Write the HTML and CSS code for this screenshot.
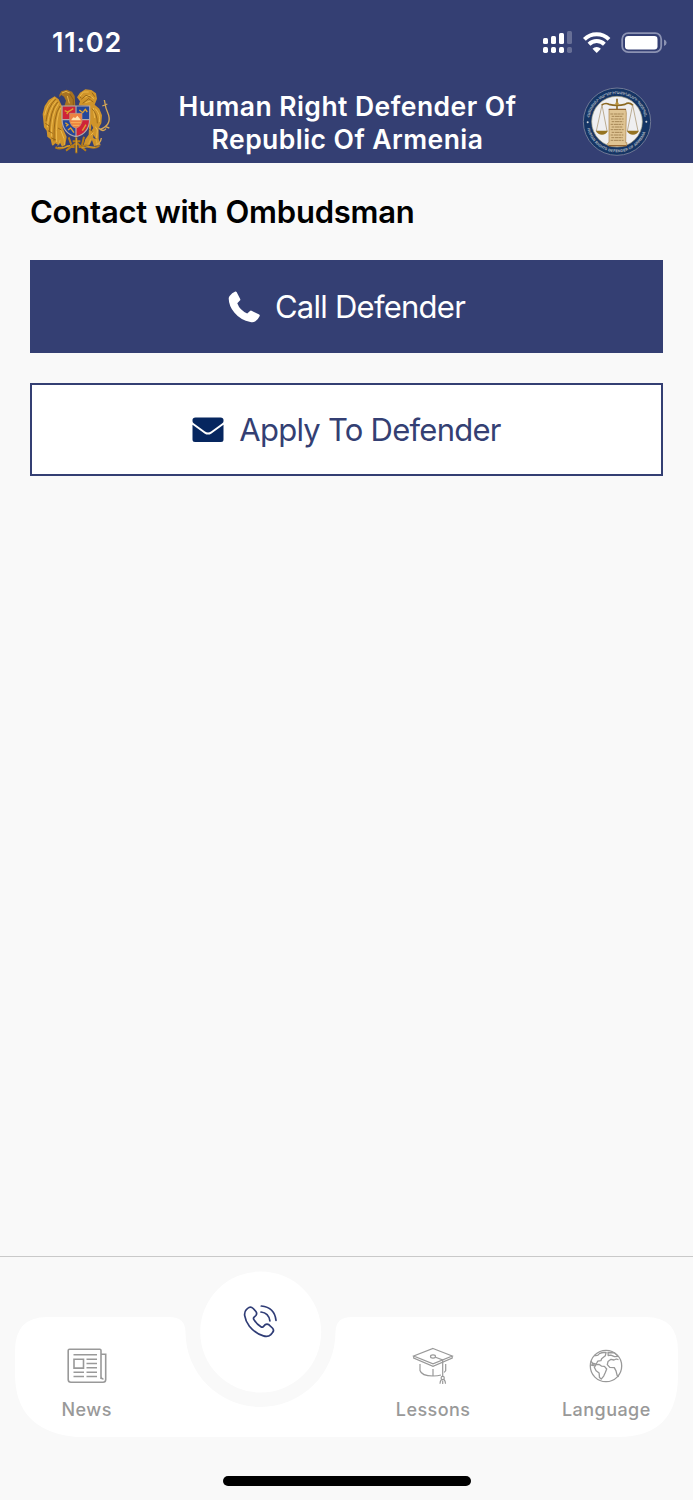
FILE: index.html
```html
<!DOCTYPE html>
<html lang="en">
<head>
    <meta charset="UTF-8">
    <meta name="viewport" content="width=device-width, initial-scale=1.0">
    <title>Human Right Defender Of Republic Of Armenia</title>
    <link rel="stylesheet" href="styles.css">
</head>
<body>
    <header>
        <div class="status-bar">
            <span class="time">11:02</span>
            <svg class="status-icons" viewBox="0 0 130 30" width="130" height="30">
                <!-- signal -->
                <g fill="#fff">
                    <rect x="3" y="13" width="5" height="6" rx="1.5"/>
                    <rect x="11" y="11" width="5" height="8" rx="1.5"/>
                    <rect x="19" y="8" width="5" height="11" rx="1.5"/>
                    <rect x="3" y="22" width="5" height="6" rx="1.7"/>
                    <rect x="11" y="22" width="5" height="6" rx="1.7"/>
                    <rect x="19" y="22" width="5" height="6" rx="1.7"/>
                </g>
                <g fill="#fff" opacity=".25">
                    <rect x="27" y="6" width="5" height="13" rx="1.5"/>
                    <rect x="27" y="22" width="5" height="6" rx="1.7"/>
                </g>
                <!-- wifi -->
                <g fill="none" stroke="#fff" stroke-width="4">
                    <path d="M44.400 14.300A17.500 17.500 0 0 1 69 14.300"/>
                    <path d="M49 19.200A11 11 0 0 1 64.400 19.200"/>
                </g>
                <path fill="#fff" d="M56.700 28l-4.200-4.300a6 6 0 0 1 8.400 0z"/>
                <!-- battery -->
                <rect x="82.200" y="8.200" width="39" height="19" rx="6" fill="none" stroke="#8c93b3" stroke-width="1.800"/>
                <rect x="85" y="11" width="32.500" height="13.500" rx="3.200" fill="#fff"/>
                <path fill="#8c93b3" d="M124 14.500q2.600 1 2.600 3.300t-2.600 3.300z"/>
            </svg>
        </div>
        <div class="title-row">
            <svg class="emblem" viewBox="0 0 285 255" width="95" height="85">
                <!-- eagle -->
                <path fill="#cf942a" d="M74 55L86 64L94 80L98 88L98 150L110 176L106 200L96 206L90 194L80 206L66 202L62 184L52 176L50 158L42 148L40 128L38 108L44 84L56 66z"/>
                <path fill="#a87322" d="M88 50L94 40L110 35L126 41L134 54L136 84L102 88L108 68L102 56L94 51L88 58z"/>
                <!-- lion -->
                <path fill="#cf942a" d="M141 58L150 44L166 34L184 36L198 46L201 62L194 80L208 92L216 112L214 136L206 150L206 182L212 202L192 204L186 186L178 202L160 204L166 184L176 170L180 84L146 82L150 70z"/>
                <path fill="#343f73" d="M184 138L190 150L183 160zM190 170L198 184L190 180zM66 206L76 196L84 200L78 208z"/>
                <g fill="none" stroke="#f0c052" stroke-width="2.500">
                    <path d="M74 60Q50 78 44 112M80 68Q56 92 52 148M86 76Q64 104 64 176M92 90Q76 118 80 192M92 156L102 182"/>
                    <path d="M96 45L108 40L120 46M112 54L118 76M150 54L160 42L176 42M164 58L178 52L192 62M166 74L184 68M196 92Q212 108 208 132M190 90L194 120M196 146L202 156L200 180M182 172L190 164"/>
                </g>
                <g fill="none" stroke="#7d510f" stroke-width="2">
                    <path d="M77 63Q53 86 48 130M83 72Q60 98 58 162M90 84Q70 112 72 190M46 136L58 144M54 158L68 166M64 180L78 186M84 150L94 156"/>
                    <path d="M118 46L130 64L130 82M154 64L168 52L184 58M158 76L176 62L190 72M186 44L194 56M186 92Q202 108 202 136M178 154L188 160M150 58L154 60"/>
                </g>
                <!-- sword and tail -->
                <path fill="none" stroke="#d7a753" stroke-width="4" d="M223 66Q226 90 236 112Q244 142 210 154M217 84L232 78M206 150Q220 164 228 152M214 180Q212 196 198 200M226 146L238 150"/>
                <!-- branches under the shield -->
                <path fill="none" stroke="#b77c17" stroke-width="6" d="M76 208Q92 216 112 204L134 208M146 208L168 202Q188 216 208 204M108 218L140 194L168 218M139 178V226M128 190H151M116 178L124 200M162 176L156 202"/>
                <path fill="none" stroke="#e9b641" stroke-width="2" d="M84 208L104 208L120 202M139 180V222M154 210L178 206L196 208M90 186L86 202M102 182L104 202M182 184L176 198M198 184L202 200"/>
                <!-- shield -->
                <path fill="#cf2338" d="M97 85h40v41H97z"/>
                <path fill="#23479b" d="M138 85h41v41h-41z"/>
                <path fill="#23479b" d="M97 126h41v50q-39-10-41-50z"/>
                <path fill="#cf2338" d="M138 126h41q-1 40-41 50z"/>
                <path fill="none" stroke="#dfa12f" stroke-width="4" d="M104 98L114 102L130 92M110 108L118 98M148 96L158 104L166 94L172 102M106 134L114 140L108 145M114 156L122 150L132 164M157 158L168 140"/>
                <path fill="none" stroke="#b6aaa7" stroke-width="3.500" d="M96 84h83v41q-2 41-41 51-40-10-42-51zM138 84v92M96 125h83"/>
                <path fill="#ec8240" stroke="#bd9987" stroke-width="2" d="M119 106h37v25q-4 16-18 20-15-5-19-20z"/>
                <path fill="#ffe2ab" d="M124 125l6-7 6 2 6-7 10 12v2h-28z"/>
                <path stroke="#f9b257" stroke-width="3" d="M122 134h31M128 142h20"/>
            </svg>
            <h1>Human Right Defender Of Republic Of Armenia</h1>
            <svg class="emblem" viewBox="0 0 285 255" width="95" height="85">
                <circle cx="141" cy="131" r="101" fill="#153565" stroke="#6f7895" stroke-width="3"/>
                <circle cx="141" cy="131" r="76" fill="#efeff1" stroke="#a6a184" stroke-width="2"/>
                <path id="ringTop" fill="none" d="M58 119A84 84 0 0 1 224 119"/>
                <path id="ringBottom" fill="none" d="M52 151A91 91 0 0 0 230 151"/>
                <text class="ring-text"><textPath href="#ringTop" textLength="236">ՀԱՅԱՍՏԱՆԻ ՄԱՐԴՈՒ ԻՐԱՎՈՒՆՔՆԵՐԻ ՊԱՇՏՊԱՆ</textPath></text>
                <text class="ring-text"><textPath href="#ringBottom" textLength="236">HUMAN RIGHTS DEFENDER OF ARMENIA</textPath></text>
                <circle cx="53" cy="133" r="3" fill="#d5d7d8"/>
                <circle cx="229" cy="131" r="3" fill="#d5d7d8"/>
                <!-- scroll -->
                <path fill="#dfc493" stroke="#a88146" stroke-width="2" d="M117 94h50l2 10-2 90h4l-2 10h-53l-4-7 5-4z"/>
                <path fill="none" stroke="#a58655" stroke-width="3" stroke-dasharray="8 2 12 1" d="M121 108h40M125 115h34M123 123h38M125 131h35M122 139h38M125 147h34M122 155h39M125 163h34M122 171h38M124 179h35M122 187h39"/>
                <path stroke="#8b5a26" stroke-width="3" d="M116 94h52M116 203h53"/>
                <!-- scales -->
                <path fill="none" stroke="#8b6821" stroke-width="5" d="M95 81q12-8 22-2 24 6 48 0 12-8 24 3M141 62v32"/>
                <circle cx="141" cy="77" r="5" fill="#b99039"/>
                <path fill="none" stroke="#a28b62" stroke-width="2" d="M96 81l-17 78M96 81l15 78M188 81l-16 78M188 81l16 78"/>
                <path fill="#957322" d="M77 158h37q-6 12-18 12t-19-12zM170 158h37q-6 12-18 12t-19-12z"/>
            </svg>
        </div>
    </header>

    <main>
        <h2>Contact with Ombudsman</h2>
        <button class="btn btn-call">
            <svg viewBox="0 0 32 32" width="32" height="32">
                <path fill="#fff" d="M7.300.500Q8.100.200 8.600 1l3.600 7.100q.4.900-.3 1.500L9.300 12.300Q11.800 19.400 19.200 22.400L22 19.900q.700-.6 1.500-.2l7.700 3.900q.8.500.5 1.300-1.700 3.600-4.300 5.400-2.100 1.400-5 .7Q12.600 29.200 6.500 21.800.8 15 .7 7.400q0-1.500.9-2.500Q4 2 7.300.500z"/>
            </svg>
            <span>Call Defender</span>
        </button>
        <button class="btn btn-apply">
            <svg viewBox="0 0 32 32" width="32" height="32">
                <path fill="#06265f" d="M3.500 3.500h25Q31.500 3.500 31.500 6v1.200q0 1.200-1.500 2.200l-11 8q-3 2.200-6 0L2 9.400Q.500 8.400.500 7.200V6q0-2.500 3-2.500z"/>
                <path fill="#06265f" d="M.500 10.800l12 8.600q3.500 2.400 7 0l12-8.600v14.700q0 2.500-2.500 2.500H3Q.500 28 .500 25.500z"/>
            </svg>
            <span>Apply To Defender</span>
        </button>
    </main>

    <nav>
        <svg class="nav-shape" viewBox="0 0 693 190" width="693" height="190">
            <path fill="#fff" d="M47 60H169q16.500 0 16.500 15a75 75 0 0 0 150 0q0-15 16.500-15H646q32 0 32 34v24q0 62-60 62H76q-61-6-61-63V94q0-34 32-34z"/>
            <circle cx="260.700" cy="75" r="60.500" fill="#fff"/>
        </svg>
        <a class="tab">
            <svg viewBox="0 0 42 42" width="42" height="42" fill="none" stroke="#999" stroke-width="1.600">
                <path d="M35 34V5.500q0-1.300-1.200-1.300H3.500Q2.200 4.200 2.200 5.500v29q0 2.700 2.800 2.700h32q2.700 0 2.700-2.700V9.200H35M35 31.500q0 2.500 2.500 2.500"/>
                <path d="M7.500 9.700h23.500M20.500 14.200H31M20.500 18.500H31M20.500 22.800H31M7.500 27.200h10.500M20.500 27.200H31M7.500 31.500h10.500M20.500 31.500H31M8 14.200h9.500v8.900H8z"/>
            </svg>
            <span>News</span>
        </a>
        <a class="tab active">
            <svg viewBox="0 0 36 36" width="36" height="36" fill="none" stroke="#2f3c76" stroke-width="1.700" stroke-linecap="round" stroke-linejoin="round">
                <path d="M4.500 4.500q3-2.800 5.700 0l2.700 3q1.500 2 0 4l-2 1.900q-.8.900 0 2.200 2.800 4.500 7 7.200 1.300.8 2.200 0l1.900-2q2-1.500 4 0l3.400 3.200q2.200 2.400 0 4.700l-1.600 1.900q-2.700 2.700-7.400 1.300-8.200-2.400-14-9.700-4-5.300-4.700-10.600Q1.200 8 3.200 5.800z"/>
                <path d="M18 8q7.700.8 8.900 8.900M18.300 2q13.300 1.400 14.700 14.300"/>
            </svg>
        </a>
        <a class="tab">
            <svg viewBox="0 0 42 42" width="42" height="42" fill="none" stroke="#999" stroke-width="1.200">
                <path d="M21 3.500L40.200 11 21 18.800 1.700 11zM1.700 11v2L21 21.300 40.200 13v-2M8 19v6.500Q9.500 31 21 31q5 0 8-1M33.700 19v6.500l-1.500 2M21 24v7"/>
                <ellipse cx="21" cy="11.500" rx="2.500" ry="1.600"/>
                <path d="M23.500 12.300l7.200 2.700v16.500"/>
                <circle cx="30.700" cy="33" r="1.600"/>
                <path d="M29.500 34.500q-1.500 1.500-1.500 4.300M32 34.500q1.500 1.500 1.500 4.300M30.700 35.500v3.500"/>
            </svg>
            <span>Lessons</span>
        </a>
        <a class="tab">
            <svg viewBox="0 0 42 42" width="42" height="42" fill="none" stroke="#999" stroke-width="1.300" stroke-linejoin="round">
                <circle cx="21" cy="21" r="15.700"/>
                <path d="M9.300 10.500q3.500.8 5-1.800 3-1.300 4.800-1.200l2-.2-.8 3.500-3.700 2.900-.7 2-3.200.5-1.500 2.800-3.500-1-1 2.300 2.200.2 1.300-1.200M5.700 16l3 3.500"/>
                <path d="M11 19.600l3.200-.2 2.200 1.700 3 .3 2.300 2.600-1.500 3.700-1.500 3.400-2.500 3-1.700-1.500-.4-4.600-3-2.200-1.800-3.500z"/>
                <path d="M23 7.500l6.500.4 3.500 3.500-3.500.3-3.700-1.500-2.600.3zM33.500 14.700l-2.200-.7-2.300 1-3-.7-3 2.300-.7 3 2.500 2.800 4.500.2 1.700 3.300 1.200 4.700 1.500 1.200"/>
            </svg>
            <span>Language</span>
        </a>
    </nav>
    <div class="home-indicator"></div>
</body>
</html>
```

FILE: styles.css
```css
body {
    font-family: Inter, "Liberation Sans", sans-serif;
    margin: 0;
    height: 1500px;
    background-color: #f9f9f9;
    display: flex;
    flex-direction: column;
    overflow: hidden;
}
header {
    height: 163px;
    background-color: #343f73;
    color: #fff;
}
.status-bar {
    height: 78px;
    box-sizing: border-box;
    padding: 25px 13px 0 52px;
    display: flex;
    justify-content: space-between;
    align-items: flex-start;
}
.time {
    font-size: 27px;
    font-weight: 600;
    line-height: 36px;
    letter-spacing: 0.8px;
}
.status-icons {
    margin-right: 10px;
}
.title-row {
    display: flex;
    justify-content: space-between;
    padding: 0 28px 0 30px;
}
h1 {
    margin: 0;
    padding-top: 12px;
    width: 350px;
    font-size: 26.5px;
    font-weight: 600;
    line-height: 33px;
    letter-spacing: 0.45px;
    text-align: center;
}
.ring-text {
    font-family: "DejaVu Sans", sans-serif;
    font-size: 11px;
    font-weight: bold;
    fill: #9aa5b5;
}
main {
    flex: 1;
    padding: 0 30px;
}
h2 {
    margin: 29px 0 28px;
    font-size: 31px;
    font-weight: 600;
    line-height: 40px;
    letter-spacing: -0.22px;
    color: #000;
}
.btn {
    width: 100%;
    height: 93px;
    margin-bottom: 30px;
    padding: 0;
    display: flex;
    justify-content: center;
    align-items: center;
    gap: 15px;
    font-family: inherit;
    font-size: 31px;
    letter-spacing: -0.75px;
    border: 2px solid #343f73;
    border-radius: 0;
}
.btn-call {
    background: #343f73;
    color: #fff;
}
.btn-apply {
    background: #fff;
    color: #343f73;
}
nav {
    position: relative;
    height: 219px;
    border-top: 1px solid #c9c9c9;
    display: grid;
    grid-template-columns: repeat(4, 1fr);
}
.nav-shape {
    position: absolute;
    top: 0;
    left: 0;
}
.tab {
    position: relative;
    padding-top: 88px;
    display: flex;
    flex-direction: column;
    align-items: center;
    color: #999;
    font-size: 18px;
    font-weight: 500;
    letter-spacing: 0.45px;
}
.tab span {
    margin-top: 11px;
    line-height: 24px;
}
.tab.active {
    padding-top: 47px;
    padding-left: 3px;
}
.home-indicator {
    width: 248px;
    height: 10px;
    margin: 0 auto 14px;
    border-radius: 5px;
    background: #000;
}
```
